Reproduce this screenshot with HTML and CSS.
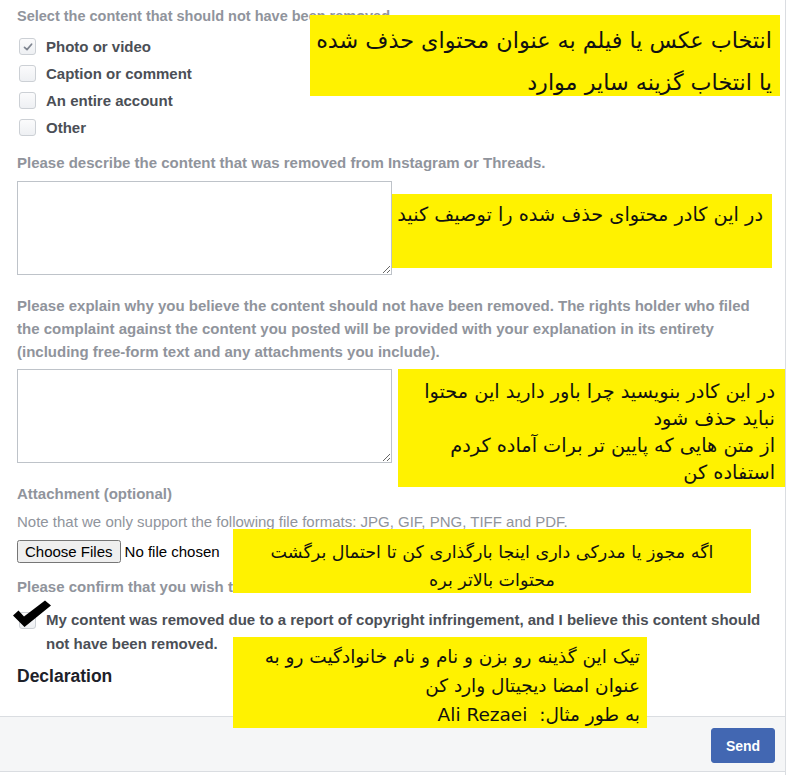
FILE: index.html
```html
<!DOCTYPE html>
<html lang="en">
<head>
<meta charset="utf-8">
<title>Counter-notification form</title>
<link rel="stylesheet" href="styles.css">
</head>
<body>
<div class="page">
  <div class="form">
    <div class="label title">Select the content that should not have been removed.</div>
    <ul class="options">
      <li class="option"><span class="box checked"><svg viewBox="0 0 12 12" width="12" height="12"><path d="M2.5 6.3 L5 8.6 L9.6 3.2" fill="none" stroke="#7f8590" stroke-width="1.7" stroke-linecap="round" stroke-linejoin="round"/></svg></span>Photo or video</li>
      <li class="option"><span class="box"></span>Caption or comment</li>
      <li class="option"><span class="box"></span>An entire account</li>
      <li class="option"><span class="box"></span>Other</li>
    </ul>
    <div class="label describe">Please describe the content that was removed from Instagram or Threads.</div>
    <textarea class="area area-one"></textarea>
    <div class="label explain">Please explain why you believe the content should not have been removed. The rights holder who filed the complaint against the content you posted will be provided with your explanation in its entirety (including free-form text and any attachments you include).</div>
    <textarea class="area area-two"></textarea>
    <div class="label attach">Attachment (optional)</div>
    <div class="note">Note that we only support the following file formats: JPG, GIF, PNG, TIFF and PDF.</div>
    <input class="file" type="file" multiple>
    <div class="label confirm">Please confirm that you wish to submit this counter-notification.</div>
    <div class="option confirm-row">
      <span class="box"></span>
      <span class="confirm-text">My content was removed due to a report of copyright infringement, and I believe this content should not have been removed.</span>
      <svg class="bigcheck" viewBox="0 0 38 27" width="38" height="27"><path d="M0 15.5 L5.5 10.5 L11 16.5 L32 0.5 L38 5.5 L11.5 27 Z" fill="#000"/></svg>
    </div>
    <div class="declaration">Declaration</div>
  </div>
  <div class="footer">
    <button class="send" type="button">Send</button>
  </div>

  <div class="note-yellow y1" dir="rtl">انتخاب عکس یا فیلم به عنوان محتوای حذف شده<br>یا انتخاب گزینه سایر موارد</div>
  <div class="note-yellow y2" dir="rtl">در این کادر محتوای حذف شده را توصیف کنید</div>
  <div class="note-yellow y3" dir="rtl">در این کادر بنویسید چرا باور دارید این محتوا<br>نباید حذف شود<br>از متن هایی که پایین تر برات آماده کردم<br>استفاده کن</div>
  <div class="note-yellow y4" dir="rtl">اگه مجوز یا مدرکی داری اینجا بارگذاری کن تا احتمال برگشت<br>محتوات بالاتر بره</div>
  <div class="note-yellow y5" dir="rtl">تیک این گذینه رو بزن و نام و نام خانوادگیت رو به<br>عنوان امضا دیجیتال وارد کن<br>به طور مثال:&nbsp; Ali Rezaei</div>
</div>
</body>
</html>
```

FILE: styles.css
```css
html, body {
  margin: 0;
  padding: 0;
  background: #fff;
}

.page {
  position: relative;
  width: 785px;
  height: 775px;
  border-right: 1px solid #dadde1;
  font-family: "Liberation Sans", Arial, sans-serif;
  overflow: hidden;
}

.form {
  padding: 7px 17px 0 17px;
  display: flex;
  flex-direction: column;
  align-items: flex-start;
}

.label {
  font-size: 15px;
  font-weight: bold;
  line-height: 18px;
  color: #90949c;
}

.title {
  font-size: 14.5px;
}

.options {
  list-style: none;
  margin: 8px 0 0 0;
  padding: 0;
}

.option {
  display: flex;
  align-items: center;
  height: 27px;
  font-size: 15px;
  font-weight: bold;
  color: #4b4f56;
}

.box {
  box-sizing: border-box;
  width: 17px;
  height: 17px;
  margin: 0 10px 0 2px;
  border: 1px solid #ccd0d5;
  border-radius: 3px;
  background: linear-gradient(#fbfbfc, #eef0f3);
  display: flex;
  align-items: center;
  justify-content: center;
  flex: none;
}

.describe {
  margin-top: 13px;
}

.area {
  box-sizing: border-box;
  width: 375px;
  height: 94px;
  margin: 9px 0 0 0;
  border: 1px solid #bec3c9;
  border-radius: 0;
  padding: 4px;
  font-family: "Liberation Sans", Arial, sans-serif;
  resize: both;
}

.explain {
  margin-top: 19px;
  max-width: 745px;
  line-height: 23px;
}

.area-two {
  margin-top: 6px;
}

.attach {
  margin-top: 22px;
}

.note {
  margin-top: 10px;
  font-size: 15px;
  line-height: 18px;
  color: #90949c;
}

.file {
  margin-top: 9px;
  font-family: "Liberation Sans", Arial, sans-serif;
  font-size: 15px;
  color: #000;
}

.confirm {
  margin-top: 15px;
}

.confirm-row {
  position: relative;
  margin-top: 12px;
  height: auto;
  align-items: flex-start;
  font-size: 15px;
  line-height: 24px;
}

.confirm-row .box {
  margin-top: 4px;
}

.confirm-text {
  flex: 1;
}

.bigcheck {
  position: absolute;
  left: -4px;
  top: -8px;
}

.declaration {
  margin-top: 10px;
  font-size: 17.5px;
  font-weight: bold;
  line-height: 20px;
  color: #1d2129;
}

.footer {
  position: absolute;
  left: 0;
  right: 0;
  top: 716px;
  height: 56px;
  box-sizing: border-box;
  border-top: 1px solid #dadde1;
  border-bottom: 1px solid #dadde1;
  background: #f5f6f7;
  display: flex;
  justify-content: flex-end;
  align-items: flex-start;
  padding: 11px 10px 0 0;
}

.send {
  width: 64px;
  height: 35px;
  background: #4267b2;
  border: 1px solid #4267b2;
  border-radius: 3px;
  color: #fff;
  font-family: "Liberation Sans", Arial, sans-serif;
  font-size: 14px;
  font-weight: bold;
  padding: 0;
}

.note-yellow {
  position: absolute;
  box-sizing: border-box;
  background: #fff200;
  color: #111;
  font-family: "DejaVu Sans", sans-serif;
  font-size: 19.3px;
  text-align: right;
  white-space: nowrap;
}

.y1 {
  left: 310px;
  top: 15px;
  width: 470px;
  height: 81px;
  font-size: 22.3px;
  line-height: 42px;
  padding: 4px 8px 0 0;
}

.y2 {
  left: 392px;
  top: 194px;
  width: 380px;
  height: 74px;
  line-height: 28px;
  padding: 7px 9px 0 0;
}

.y3 {
  left: 398px;
  top: 369px;
  width: 387px;
  height: 118px;
  line-height: 27px;
  padding: 9px 10px 0 0;
}

.y4 {
  left: 233px;
  top: 529px;
  width: 518px;
  height: 64px;
  font-size: 17.5px;
  line-height: 28px;
  padding: 9px 0 0 0;
  text-align: center;
}

.y5 {
  left: 233px;
  top: 637px;
  width: 414px;
  height: 91px;
  font-size: 18.5px;
  line-height: 29px;
  padding: 5px 7px 0 0;
}
```
